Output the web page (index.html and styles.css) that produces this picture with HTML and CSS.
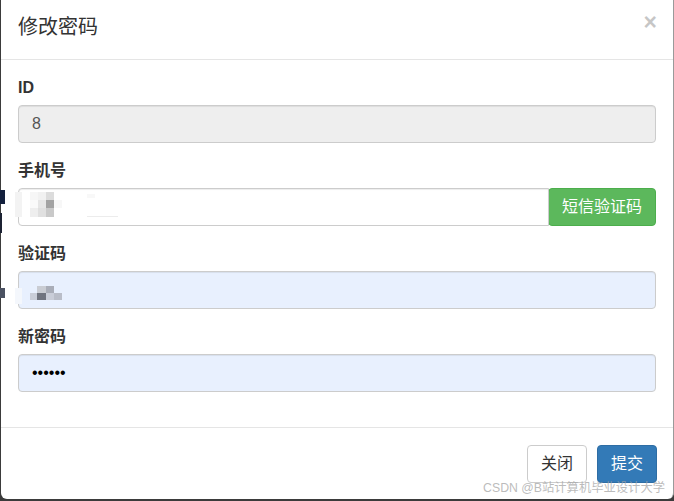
FILE: index.html
```html
<!DOCTYPE html>
<html lang="zh-CN">
<head>
<meta charset="utf-8">
<title>修改密码</title>
<link rel="stylesheet" href="styles.css">
</head>
<body>
<div class="backdrop-mark mark-navy"></div>
<div class="backdrop-mark mark-navy2"></div>
<div class="backdrop-mark mark-grey"></div>
<div class="modal">
  <div class="modal-header">
    <h4 class="modal-title">修改密码</h4>
    <button type="button" class="close">×</button>
  </div>
  <div class="modal-body">
    <div class="form-group">
      <label class="label">ID</label>
      <input class="form-control disabled" type="text" value="8" readonly>
    </div>
    <div class="form-group">
      <label class="label">手机号</label>
      <div class="input-group">
        <div class="field">
          <input class="form-control group-input" type="text" value="">
          <svg class="mosaic mosaic-phone" width="110" height="30" viewBox="0 0 110 30">
            <rect x="0" y="0" width="7" height="25" fill="#f3f3f3"/>
            <rect x="15" y="0" width="8" height="8" fill="#f6f6f6"/>
            <rect x="23" y="0" width="8" height="8" fill="#f1f1f1"/>
            <rect x="31" y="0" width="8" height="8" fill="#dcdcdc"/>
            <rect x="15" y="8" width="8" height="8" fill="#fafafa"/>
            <rect x="23" y="8" width="8" height="8" fill="#e6e6e6"/>
            <rect x="31" y="8" width="8" height="8" fill="#a2a2a2"/>
            <rect x="39" y="8" width="8" height="8" fill="#f7f7f7"/>
            <rect x="15" y="16" width="8" height="9" fill="#eeeeee"/>
            <rect x="23" y="16" width="8" height="9" fill="#e0e0e0"/>
            <rect x="31" y="16" width="8" height="9" fill="#c9c9c9"/>
            <rect x="72" y="2" width="8" height="4" fill="#f8f8f8"/>
            <rect x="72" y="24" width="31" height="1" fill="#ececec"/>
          </svg>
        </div>
        <button type="button" class="btn btn-success group-btn">短信验证码</button>
      </div>
    </div>
    <div class="form-group">
      <label class="label">验证码</label>
      <div class="field">
        <input class="form-control autofill" type="text" value="">
        <svg class="mosaic mosaic-code" width="60" height="22" viewBox="0 0 60 22">
          <rect x="0" y="4" width="7" height="16" fill="#f4f7fc"/>
          <rect x="22" y="2" width="9" height="7" fill="#c9ccd3"/>
          <rect x="31" y="2" width="8" height="7" fill="#a9adb8"/>
          <rect x="15" y="9" width="7" height="7" fill="#c9cdd8"/>
          <rect x="22" y="9" width="9" height="7" fill="#70747f"/>
          <rect x="31" y="9" width="8" height="7" fill="#c9cdd8"/>
          <rect x="39" y="9" width="8" height="7" fill="#b9bdc8"/>
        </svg>
      </div>
    </div>
    <div class="form-group">
      <label class="label">新密码</label>
      <input class="form-control autofill password" type="password" value="123456">
    </div>
  </div>
  <div class="modal-footer">
    <button type="button" class="btn btn-default">关闭</button>
    <button type="button" class="btn btn-primary">提交</button>
  </div>
  <div class="watermark">CSDN @B站计算机毕业设计大学</div>
</div>
</body>
</html>
```
FILE: styles.css
```css
* {
  box-sizing: border-box;
}

html, body {
  margin: 0;
  padding: 0;
}

body {
  width: 674px;
  height: 501px;
  background: #3b3b3b;
  font-family: "Liberation Sans", "Noto Sans CJK SC", sans-serif;
  color: #333;
  position: relative;
  overflow: hidden;
}

.modal {
  position: relative;
  margin-left: 1px;
  width: 673px;
  background: #fff;
  border-right: 1px solid #9a9a9a;
  border-radius: 0 0 6px 6px;
}

.modal-header {
  display: flex;
  justify-content: space-between;
  align-items: flex-start;
  height: 60px;
  padding: 13px 17px 0 17px;
  border-bottom: 1px solid #e5e5e5;
}

.modal-title {
  margin: 0;
  font-size: 20px;
  font-weight: normal;
  line-height: 28px;
  color: #333;
}

.close {
  margin: -2px -1px 0 0;
  padding: 0;
  border: 0;
  background: none;
  font-family: "Liberation Sans", sans-serif;
  font-size: 23px;
  font-weight: bold;
  line-height: 22px;
  color: #000;
  opacity: 0.22;
}

.modal-body {
  padding: 17px 17px 18px 17px;
}

.form-group {
  margin-bottom: 17px;
}

.label {
  display: block;
  margin-bottom: 6px;
  font-size: 16px;
  font-weight: bold;
  line-height: 22px;
  color: #333;
}

.form-control {
  display: block;
  width: 100%;
  height: 38px;
  padding: 0 13px;
  font-family: "Liberation Sans", "Noto Sans CJK SC", sans-serif;
  font-size: 16px;
  color: #555;
  background: #fff;
  border: 1px solid #ccc;
  border-radius: 4px;
  box-shadow: inset 0 1px 1px rgba(0, 0, 0, 0.075);
  outline: none;
}

.disabled {
  background: #eee;
}

.autofill {
  background: #e8f0fe;
}

.password {
  color: #000;
  font-size: 16px;
  letter-spacing: 0;
}

.field {
  position: relative;
}

.input-group {
  display: flex;
}

.input-group .field {
  flex: 1;
}

.group-input {
  border-radius: 4px 0 0 4px;
}

.group-btn {
  height: 38px;
  border-radius: 0 4px 4px 0;
  margin-left: -1px;
}

.mosaic {
  position: absolute;
  display: block;
}

.mosaic-phone {
  left: -3px;
  top: 4px;
}

.mosaic-code {
  left: -3px;
  top: 13px;
}

.btn {
  display: inline-block;
  height: 38px;
  padding: 0 13px;
  font-family: "Liberation Sans", "Noto Sans CJK SC", sans-serif;
  font-size: 16px;
  line-height: 36px;
  border: 1px solid transparent;
  border-radius: 4px;
  white-space: nowrap;
}

.btn-success {
  color: #fff;
  background: #5cb85c;
  border-color: #4cae4c;
}

.btn-default {
  color: #333;
  background: #fff;
  border-color: #ccc;
}

.btn-primary {
  color: #fff;
  background: #337ab7;
  border-color: #2e6da4;
}

.modal-footer {
  display: flex;
  justify-content: flex-end;
  gap: 10px;
  padding: 17px 16px 16px 17px;
  border-top: 1px solid #e5e5e5;
}

.watermark {
  position: absolute;
  right: 8px;
  bottom: 4px;
  font-size: 12.3px;
  line-height: 14px;
  color: rgba(165, 165, 165, 0.75);
  white-space: nowrap;
}

.backdrop-mark {
  position: absolute;
  z-index: 2;
}

.mark-navy {
  left: 0;
  top: 190px;
  width: 5px;
  height: 14px;
  background: #13203d;
}

.mark-navy2 {
  left: 0;
  top: 213px;
  width: 2px;
  height: 20px;
  background: #1c2233;
}

.mark-grey {
  left: 0;
  top: 288px;
  width: 5px;
  height: 10px;
  background: #4b5262;
}
```
